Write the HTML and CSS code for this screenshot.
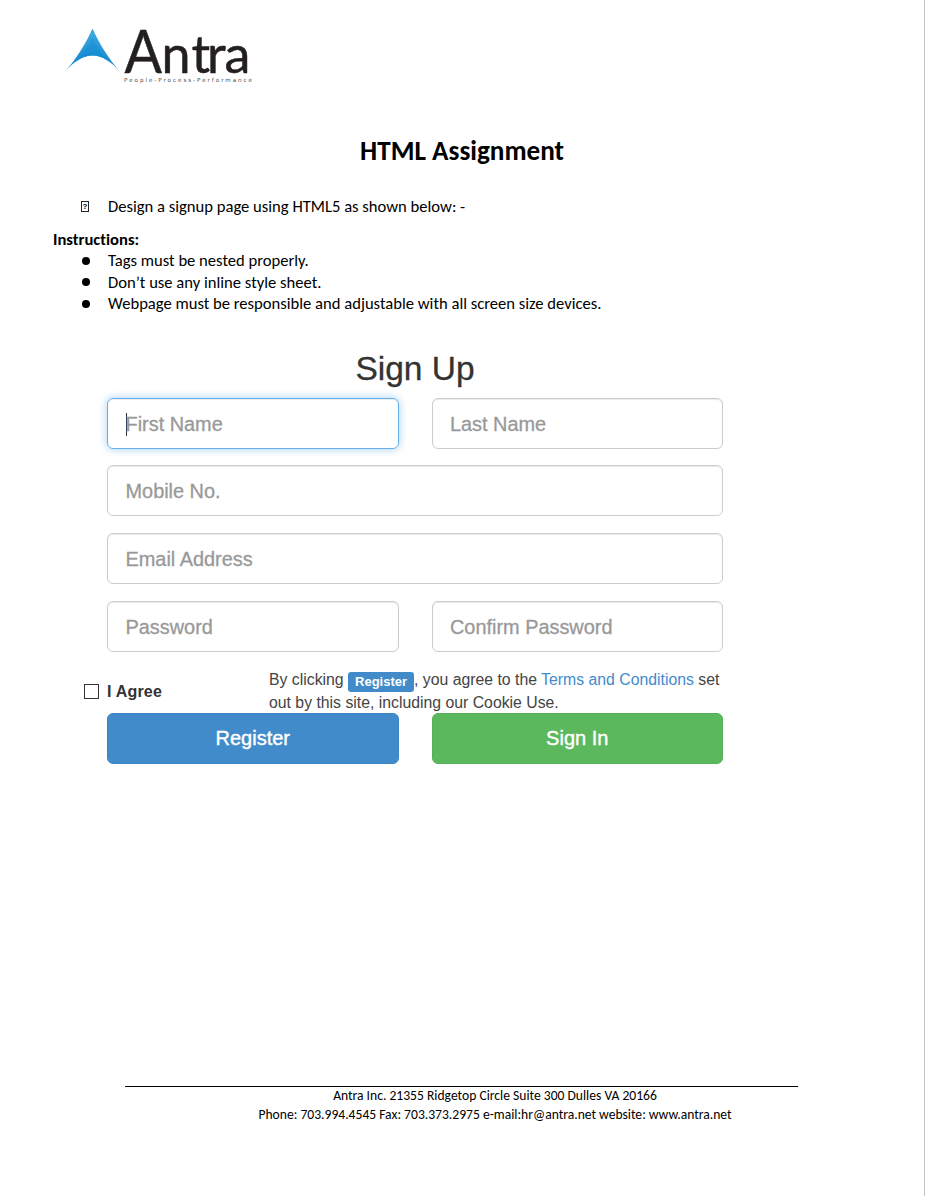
FILE: index.html
```html
<!DOCTYPE html>
<html lang="en">
<head>
<meta charset="utf-8">
<title>HTML Assignment</title>
<link rel="stylesheet" href="styles.css">
</head>
<body>
<div class="page">
  <header class="header">
    <svg class="logo" viewBox="60 20 200 70" role="img" aria-label="Antra">
      <defs>
        <linearGradient id="peak" x1="0" y1="0" x2="0" y2="1">
          <stop offset="0" stop-color="#42ace0"/>
          <stop offset="1" stop-color="#0b7fcb"/>
        </linearGradient>
        <linearGradient id="inner" x1="0" y1="0" x2="0" y2="1">
          <stop offset="0" stop-color="#2a9bd8"/>
          <stop offset="1" stop-color="#0a86cf"/>
        </linearGradient>
      </defs>
      <path fill="url(#peak)" d="M92.500 28.500C86 43 77 58 64.500 72.500C74 61 83 55.500 92.500 55.500S111 61 120.500 72.500C108 58 99 43 92.500 28.500Z"/>
      <path fill="url(#inner)" d="M92.500 37C88 47 81 57 72.500 64.500C80 58 86 55.500 92.500 55.500S105 58 112.500 64.500C104 57 97 47 92.500 37Z"/>
      <text class="logo-name" y="72.500"><tspan x="124.500" textLength="37.500" lengthAdjust="spacingAndGlyphs">A</tspan><tspan class="low" x="161.500 191.500 207 224.500">ntra</tspan></text>
      <text class="logo-tag" x="124" y="81.800" textLength="128">People-Process-Performance</text>
    </svg>
  </header>
  <main>
    <h1 class="title">HTML Assignment</h1>
    <p class="task"><span class="mark">?</span><span class="line">Design a signup page using HTML5 as shown below: -</span></p>
    <h2 class="subhead">Instructions:</h2>
    <ul class="rules">
      <li><span class="line">Tags must be nested properly.</span></li>
      <li><span class="line">Don’t use any inline style sheet.</span></li>
      <li><span class="line">Webpage must be responsible and adjustable with all screen size devices.</span></li>
    </ul>
    <form class="signup">
      <h2 class="signup-title">Sign Up</h2>
      <div class="fields">
        <div class="field focused"><i class="caret"></i>First Name</div>
        <div class="field">Last Name</div>
        <div class="field wide">Mobile No.</div>
        <div class="field wide">Email Address</div>
        <div class="field">Password</div>
        <div class="field">Confirm Password</div>
      </div>
      <div class="agree">
        <label class="check"><span class="box"></span>I Agree</label>
        <p class="terms">By clicking <b class="badge">Register</b>, you agree to the <a class="link">Terms and Conditions</a> set<br>out by this site, including our Cookie Use.</p>
      </div>
      <div class="actions">
        <button type="button" class="btn blue">Register</button>
        <button type="button" class="btn green">Sign In</button>
      </div>
    </form>
  </main>
  <footer class="footer">
    <p>Antra Inc. 21355 Ridgetop Circle Suite 300 Dulles VA 20166</p>
    <p>Phone: 703.994.4545 Fax: 703.373.2975 e-mail:hr@antra.net website: www.antra.net</p>
  </footer>
</div>
</body>
</html>
```
FILE: styles.css
```css
* { box-sizing: border-box; }
body { margin: 0; background: #fff; color: #000; font-family: Carlito, Lato, sans-serif; font-variant-ligatures: none; }
h1, h2, p, ul { margin: 0; padding: 0; }
.page { width: 925px; height: 1196px; border-right: 1px solid #c3c3c3; display: flex; flex-direction: column; overflow: hidden; }
.header { padding: 20px 0 0 60px; height: 90px; }
.logo { display: block; width: 200px; height: 70px; overflow: visible; }
.logo-name { font: 400 60px Lato, sans-serif; fill: #231f20; stroke: #231f20; stroke-width: .5px; }
.low { font-size: 52px; }
.logo-tag { font: 400 5.6px "DejaVu Sans", sans-serif; fill: #4a4748; }
.title { margin-top: 41px; text-align: center; font-size: 27.2px; line-height: 40px; font-weight: 700; }
.task { display: flex; align-items: center; margin-top: 24px; padding-left: 81px; height: 22px; font-size: 16.6px; }
.mark { width: 8px; height: 11px; border: 1px solid #222; font: 700 8px/9px "Liberation Sans", sans-serif; text-align: center; margin-right: 19px; }
.line { white-space: nowrap; }
.subhead { margin: 11px 0 0 53px; font-size: 16.6px; line-height: 22px; }
.rules { list-style: none; font-size: 16.6px; line-height: 21.5px; }
.rules li { display: flex; align-items: center; padding-left: 82px; }
.rules li::before { content: ""; width: 8px; height: 8px; border-radius: 50%; background: #000; margin-right: 18px; }
.signup { margin: 36px 0 0 107px; width: 616px; font-family: "Liberation Sans", Arial, sans-serif; color: #333; }
.signup-title { height: 47px; text-align: center; font-size: 33.5px; line-height: 36px; font-weight: 400; -webkit-text-stroke: 0.3px #333; }
.fields, .actions { display: grid; grid-template-columns: 291.5px 291.5px; column-gap: 33px; row-gap: 16.7px; }
.field { display: flex; align-items: center; height: 51px; padding: 2px 0 0 17.5px; border: 1px solid #ccc; border-radius: 6px; box-shadow: inset 0 1px 1px rgba(0,0,0,.09); color: #999; font-size: 19.9px; -webkit-text-stroke: 0.3px #999; }
.wide { grid-column: span 2; }
.focused { border-color: #66afe9; box-shadow: inset 0 1px 1px rgba(0,0,0,.08), 0 0 9px rgba(102,175,233,.6); }
.caret { width: 1px; height: 23px; margin-right: -1px; background: #333; }
.agree { display: flex; height: 61px; padding-top: 17px; margin-left: -23px; }
.check { display: flex; align-items: center; width: 185px; height: 46px; font-size: 16px; letter-spacing: .2px; font-weight: 700; }
.box { width: 15px; height: 15px; border: 1px solid #333; margin-right: 8px; }
.terms { font-size: 15.8px; line-height: 22px; white-space: nowrap; color: #444; }
.badge { display: inline-block; height: 20px; padding: 0 7px; border-radius: 3px; background: #428bca; color: #fff; font-size: 13px; line-height: 19px; vertical-align: -1px; }
.link { color: #428bca; }
.btn { height: 51px; border: 1px solid #357ebd; border-radius: 6px; color: #fff; font: 20px "Liberation Sans", Arial, sans-serif; -webkit-text-stroke: 0.4px #fff; }
.blue { background: #428bca; border-color: #3b84c4; }
.green { background: #5cb85c; border-color: #55b155; }
.footer { margin: auto 0 72px 125px; width: 673px; height: 38px; border-top: 1px solid #000; padding-left: 67px; text-align: center; font-size: 13.6px; line-height: 19px; }
.footer p { white-space: nowrap; }
.footer p:first-child { margin-top: -1px; }
```
